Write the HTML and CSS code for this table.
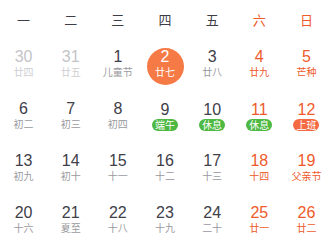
FILE: index.html
```html
<!DOCTYPE html>
<html lang="zh">
<head>
<meta charset="utf-8">
<link rel="stylesheet" href="styles.css">
</head>
<body>
<div class="cal">
  <div class="week">
    <span>一</span><span>二</span><span>三</span><span>四</span><span>五</span><span class="we">六</span><span class="we">日</span>
  </div>
  <div class="days">
    <div class="day dim"><b>30</b><i>廿四</i></div>
    <div class="day dim"><b>31</b><i>廿五</i></div>
    <div class="day"><b>1</b><i>儿童节</i></div>
    <div class="day today"><b>2</b><i>廿七</i></div>
    <div class="day"><b>3</b><i>廿八</i></div>
    <div class="day we"><b>4</b><i>廿九</i></div>
    <div class="day we"><b>5</b><i>芒种</i></div>

    <div class="day"><b>6</b><i>初二</i></div>
    <div class="day"><b>7</b><i>初三</i></div>
    <div class="day"><b>8</b><i>初四</i></div>
    <div class="day"><b>9</b><i class="tag rest">端午</i></div>
    <div class="day"><b>10</b><i class="tag rest">休息</i></div>
    <div class="day we"><b>11</b><i class="tag rest">休息</i></div>
    <div class="day we"><b>12</b><i class="tag work">上班</i></div>

    <div class="day"><b>13</b><i>初九</i></div>
    <div class="day"><b>14</b><i>初十</i></div>
    <div class="day"><b>15</b><i>十一</i></div>
    <div class="day"><b>16</b><i>十二</i></div>
    <div class="day"><b>17</b><i>十三</i></div>
    <div class="day we"><b>18</b><i>十四</i></div>
    <div class="day we"><b>19</b><i>父亲节</i></div>

    <div class="day"><b>20</b><i>十六</i></div>
    <div class="day"><b>21</b><i>夏至</i></div>
    <div class="day"><b>22</b><i>十八</i></div>
    <div class="day"><b>23</b><i>十九</i></div>
    <div class="day"><b>24</b><i>二十</i></div>
    <div class="day we"><b>25</b><i>廿一</i></div>
    <div class="day we"><b>26</b><i>廿二</i></div>
  </div>
</div>
</body>
</html>
```
FILE: styles.css
```css
html, body {
  margin: 0;
  padding: 0;
  background: #ffffff;
}
.cal {
  width: 330px;
  font-family: "Liberation Sans", "Noto Sans CJK SC", sans-serif;
}
.week {
  display: grid;
  grid-template-columns: repeat(7, 1fr);
  height: 38px;
  align-items: center;
  text-align: center;
  font-family: "Noto Sans CJK SC", sans-serif;
  font-size: 13px;
  color: #3d3d45;
}
.week .we {
  color: #ee5a2a;
}
.days {
  display: grid;
  grid-template-columns: repeat(7, 1fr);
  grid-auto-rows: 52px;
}
.day {
  position: relative;
  z-index: 0;
  display: flex;
  flex-direction: column;
  align-items: center;
  justify-content: center;
  color: #404049;
}
.day b {
  font-weight: normal;
  font-size: 16px;
  line-height: 16px;
  height: 16px;
}
.day i {
  font-style: normal;
  font-family: "Noto Sans CJK SC", sans-serif;
  font-size: 10px;
  line-height: 14px;
  height: 14px;
  color: #9a9a9e;
}
.day.we {
  color: #ee5a2a;
}
.day.we i {
  color: #ee5a2a;
}
.day.dim b {
  color: #c4c4c8;
}
.day.dim i {
  color: #cfcfd2;
}
.day.today {
  color: #ffffff;
}
.day.today::before {
  content: "";
  position: absolute;
  z-index: -1;
  left: 50%;
  top: 50%;
  width: 37px;
  height: 37px;
  margin: -16px 0 0 -18px;
  border-radius: 50%;
  background: #f67a45;
}
.day.today i {
  color: #ffffff;
}
.day i.tag {
  color: #ffffff;
  border-radius: 6px;
  padding: 0 3px;
  height: 12px;
  line-height: 12px;
  margin-top: 1px;
}
.tag.rest {
  background: #4db842;
}
.tag.work {
  background: #f46b43;
}
```
